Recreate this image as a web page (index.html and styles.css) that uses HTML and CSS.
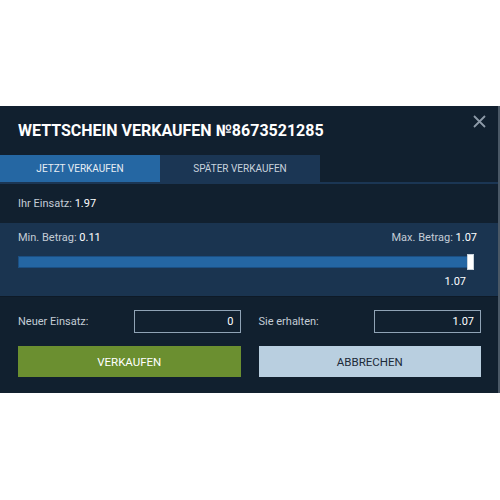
FILE: index.html
```html
<!DOCTYPE html>
<html lang="de">
<head>
<meta charset="UTF-8">
<title>Wettschein verkaufen</title>
<link rel="stylesheet" href="styles.css">
</head>
<body>

<div class="modal">
    <!-- Kopf -->
    <div class="head">
        <h2>WETTSCHEIN VERKAUFEN №8673521285</h2>
        <span class="close">
            <svg width="13" height="13" viewBox="0 0 13 13"><path d="M1 1L12 12M12 1L1 12" stroke="#8d9aa8" stroke-width="1.8"/></svg>
        </span>
    </div>

    <!-- Tabs -->
    <div class="tabs">
        <div class="tab active">JETZT VERKAUFEN</div>
        <div class="tab">SPÄTER VERKAUFEN</div>
    </div>

    <div class="stake">Ihr Einsatz: <b>1.97</b></div>

    <!-- Slider -->
    <div class="range">
        <div class="limits">
            <span>Min. Betrag: <b>0.11</b></span>
            <span>Max. Betrag: <b>1.07</b></span>
        </div>
        <div class="track"><div class="thumb"></div></div>
        <div class="current">1.07</div>
    </div>

    <!-- Eingaben -->
    <div class="form">
        <div class="col">
            <div class="field">
                <label>Neuer Einsatz:</label>
                <div class="input">0</div>
            </div>
            <button class="btn sell">VERKAUFEN</button>
        </div>
        <div class="col">
            <div class="field">
                <label>Sie erhalten:</label>
                <div class="input">1.07</div>
            </div>
            <button class="btn cancel">ABBRECHEN</button>
        </div>
    </div>
</div>

</body>
</html>
```

FILE: styles.css
```css
body {
    margin: 0;
    background: #fff;
    font-family: Roboto, "Liberation Sans", sans-serif;
}

.modal {
    margin-top: 106px;
    width: 498px;
    background: #11202f;
    border-right: 2px solid #4a5866;
    color: #fff;
}

/* Kopf */
.head {
    display: flex;
    justify-content: space-between;
    padding: 15px 11px 0 18px;
    height: 34px;
}

.head h2 {
    margin: 0;
    font-size: 16px;
    font-weight: 700;
    line-height: 20px;
}

.close {
    margin-top: -8px;
    width: 14px;
    height: 14px;
}

/* Tabs */
.tabs {
    display: flex;
    border-bottom: 2px solid #1b3654;
}

.tab {
    width: 160px;
    height: 27px;
    line-height: 27px;
    text-align: center;
    font-size: 10px;
    color: #c8d3de;
    background: #1b3654;
}

.tab.active {
    background: #2567a3;
    color: #e8eef4;
}

.stake {
    height: 39px;
    line-height: 39px;
    padding-left: 18px;
    font-size: 11px;
    color: #c3ccd6;
}

.stake b, .limits b {
    font-weight: 400;
    color: #fff;
}

/* Slider */
.range {
    background: #1a3450;
    padding: 8px 18px 0 18px;
    height: 65px;
    border-bottom: 1px solid #0e1a27;
}

.limits {
    display: flex;
    justify-content: space-between;
    font-size: 11px;
    color: #c3ccd6;
    line-height: 14px;
    padding-right: 3px;
}

.track {
    position: relative;
    margin-top: 11px;
    margin-right: 9px;
    height: 10px;
    background: #2466a3;
    border: 1px solid #1b4f83;
}

.thumb {
    position: absolute;
    right: -4px;
    top: -3px;
    width: 7px;
    height: 16px;
    background: #fff;
    border: 1px solid #c9d3dc;
    box-sizing: border-box;
}

.current {
    text-align: right;
    font-size: 11px;
    padding-right: 14px;
    margin-top: 7px;
}

/* Eingaben */
.form {
    display: flex;
    gap: 18px;
    padding: 13px 17px 16px 18px;
}

.col {
    flex: 1;
}

.field {
    display: flex;
    justify-content: space-between;
    align-items: center;
}

.field label {
    font-size: 11px;
    color: #c3ccd6;
}

.input {
    width: 99px;
    height: 21px;
    line-height: 21px;
    border: 1px solid #90a3b5;
    padding-right: 6px;
    text-align: right;
    font-size: 11px;
}

.btn {
    display: block;
    width: 100%;
    height: 31px;
    margin-top: 13px;
    border: none;
    font-family: inherit;
    font-size: 11.5px;
}

.sell {
    background: #6b8f30;
    color: #fff;
}

.cancel {
    background: #b9cfe0;
    color: #1c2a38;
}
```
